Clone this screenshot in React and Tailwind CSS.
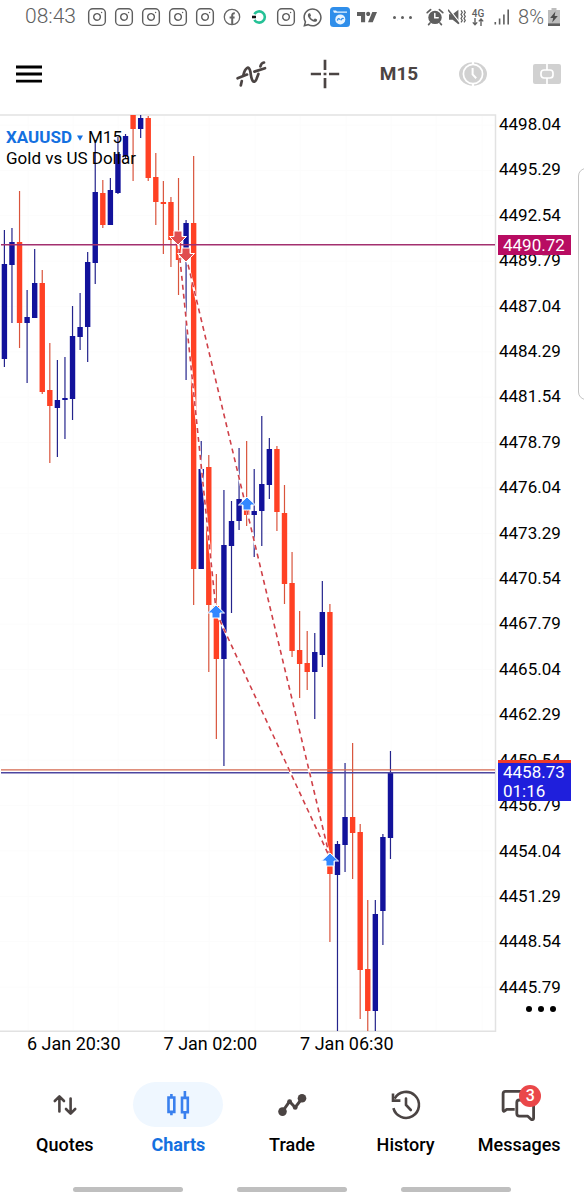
import React from 'react';
import { Instagram } from 'lucide-react';
import { FaWhatsapp } from 'react-icons/fa';
import { SiTradingview } from 'react-icons/si';

const BULL = '#12129b';
const BEAR = '#ff4124';

const CANDLE_START = 4.4;
const CANDLE_STEP = 7.57;

// [direction, body top, body bottom, high, low]
const CANDLES = [
  ['up', 264, 359, 230, 367],
  ['up', 242, 265, 228, 323],
  ['down', 242, 323, 191, 348],
  ['up', 317, 323, 290, 383],
  ['up', 283, 318, 249, 318],
  ['down', 283, 392, 270, 394],
  ['down', 390, 406, 343, 463],
  ['up', 400, 408, 360, 457],
  ['up', 398, 400, 357, 439],
  ['up', 336, 399, 306, 420],
  ['up', 327, 337, 293, 350],
  ['up', 262, 327, 252, 362],
  ['up', 192, 263, 140, 284],
  ['down', 193, 225, 180, 228],
  ['up', 190, 225, 178, 225],
  ['up', 154, 193, 137, 194],
  ['up', 136, 156, 134, 158],
  ['down', 115, 129, 115, 181],
  ['up', 118, 129, 115, 138],
  ['down', 118, 178, 116, 181],
  ['down', 177, 202, 153, 225],
  ['down', 202, 204, 181, 254],
  ['down', 202, 240, 197, 267],
  ['down', 235, 260, 178, 295],
  ['up', 223, 255, 220, 380],
  ['down', 223, 569, 156, 605],
  ['up', 469, 569, 441, 569],
  ['down', 467, 605, 455, 672],
  ['down', 606, 659, 574, 739],
  ['up', 545, 659, 490, 766],
  ['up', 521, 546, 501, 613],
  ['up', 499, 521, 448, 530],
  ['down', 499, 515, 441, 526],
  ['up', 511, 515, 469, 557],
  ['up', 484, 511, 416, 546],
  ['up', 449, 485, 438, 499],
  ['down', 449, 512, 446, 531],
  ['down', 513, 584, 485, 604],
  ['down', 583, 651, 552, 657],
  ['down', 650, 664, 611, 698],
  ['down', 663, 672, 631, 690],
  ['up', 652, 672, 633, 719],
  ['up', 612, 655, 581, 667],
  ['down', 612, 874, 604, 942],
  ['up', 844, 875, 841, 1031],
  ['up', 817, 845, 763, 872],
  ['down', 817, 833, 743, 879],
  ['down', 832, 970, 824, 1019],
  ['down', 969, 1011, 900, 1031],
  ['up', 914, 1011, 900, 1031],
  ['up', 837, 911, 834, 945],
  ['up', 773, 838, 751, 859],
];

const TRADE_LINES = [
  [178, 240, 216, 610],
  [186, 256, 330, 858],
  [216, 612, 330, 858],
];

const SELLS = [[178, 238], [186, 255]];
const BUYS = [[216, 612], [247, 504], [330, 860]];

const PRICES = [
  '4498.04', '4495.29', '4492.54', '4489.79', '4487.04', '4484.29', '4481.54',
  '4478.79', '4476.04', '4473.29', '4470.54', '4467.79', '4465.04', '4462.29',
  '4459.54', '4456.79', '4454.04', '4451.29', '4448.54', '4445.79',
];

const FacebookIcon = () => (
  <svg width="18" height="18" viewBox="0 0 18 18" fill="none" stroke="#666">
    <circle cx="9" cy="9" r="7.7" strokeWidth="1.3" />
    <path d="M9.2 16.5V7.3c0-1.5.8-2.1 2.6-2M6.6 9.4h5" strokeWidth="2" />
  </svg>
);

const RingIcon = () => (
  <svg width="16" height="16" viewBox="0 0 16 16" fill="none">
    <path d="M3.4 5.2A5.6 5.6 0 1 1 3.4 10.8" stroke="#25c196" strokeWidth="2.6" />
    <path d="M1 8h4" stroke="#111" strokeWidth="2.6" />
  </svg>
);

const ChannelIcon = () => (
  <svg width="20" height="20" viewBox="0 0 20 20">
    <rect width="20" height="20" rx="3.5" fill="#2f8eea" />
    <path d="M3 3.4h3l1 1.2h10v1.2H4z" fill="#e8f4ff" />
    <circle cx="10.3" cy="12.4" r="5" fill="#e8f4ff" />
    <path d="M7.4 13.6c.4-2.4 2-2.4 2.6-.8M11 13.4c.2-2 2-2.4 2.6-1.6" fill="none" stroke="#2f8eea" strokeWidth="1.3" />
  </svg>
);

const AlarmIcon = () => (
  <svg width="18" height="18" viewBox="0 0 18 18" fill="none" strokeLinecap="round">
    <circle cx="9" cy="9.4" r="6.7" fill="#5f5f5f" />
    <path d="M1.2 4.6 4.6 1.6M16.8 4.6 13.4 1.6M4 15l-1.4 1.6M14 15l1.4 1.6" stroke="#5f5f5f" strokeWidth="1.7" />
    <path d="M8.8 5.6v4.2h3.4" stroke="#fff" strokeWidth="1.5" />
  </svg>
);

const VibrateIcon = () => (
  <svg width="18" height="18" viewBox="0 0 18 18" fill="none">
    <path d="M1 6.2h3.6L10.4 1.8v14.4l-5.8-4.4H1z" fill="#5f5f5f" />
    <path d="M1.2 1.4 12 15" stroke="#fff" strokeWidth="1.4" />
    <path d="M0 1.8 11 15.8" stroke="#5f5f5f" strokeWidth="1.5" />
    <path d="M13 2.4l1.3 2-1.3 2 1.3 2-1.3 2 1.3 2-1.3 2M16 2.4l1.3 2-1.3 2 1.3 2-1.3 2 1.3 2-1.3 2" stroke="#5f5f5f" strokeWidth="1.2" />
  </svg>
);

const DataArrowsIcon = () => (
  <svg width="12" height="8" viewBox="0 0 12 8" fill="none" stroke="#5f5f5f" strokeWidth="1.4">
    <path d="M3 0v6.6M.8 4.4 3 6.8l2.2-2.4M9 8V1.2M6.8 3.4 9 1l2.2 2.4" />
  </svg>
);

const SignalIcon = () => (
  <svg width="16" height="16" viewBox="0 0 16 16" fill="#5f5f5f">
    <path d="M.5 13h1.6v2.5H.5zM4.8 9.5h1.6v6H4.8zM9.1 5.5h1.6v10H9.1zM13.4.5H15v15h-1.6z" />
  </svg>
);

const BatteryIcon = () => (
  <svg width="12" height="18" viewBox="0 0 12 18">
    <path d="M3.5 0h5v2H12v16H0V2h3.5z" fill="#bdbdbd" />
    <path d="M0 15.4h12V18H0z" fill="#5f5f5f" />
    <path d="M7.4 3.4 2.2 10h3L4.2 14.6 9.8 8H6.6z" fill="#4a4a4a" />
  </svg>
);

const MenuIcon = () => (
  <svg width="26" height="18" viewBox="0 0 26 18" stroke="#000" strokeWidth="2.8">
    <path d="M0 2h26M0 9h26M0 16.2h26" />
  </svg>
);

const IndicatorsIcon = () => (
  <svg width="31" height="26" viewBox="0 0 31 26" fill="none" stroke="#4b4443" strokeWidth="2.7" strokeLinecap="round">
    <path d="M4.8 24.4 5.8 20M7.4 14C9 7 13 3.5 14.4 10.7 15.3 19 17.5 24 20.4 18.3L22.4 13M24.4 5.4C25 3 26 1.8 28 1.5" />
    <path d="M1.6 17.3 11 13.6M18.4 10.6 29 7.2" />
  </svg>
);

const CrosshairIcon = () => (
  <svg width="30" height="30" viewBox="0 0 30 30" fill="none" stroke="#4b4443" strokeWidth="2.7">
    <path d="M.8 15H11M19 15h10.2M15 .8V11M15 19v10.2M13.6 15h2.8" />
  </svg>
);

const TickClockIcon = () => (
  <svg width="30" height="24" viewBox="0 0 30 24" fill="none">
    <ellipse cx="15" cy="12" rx="14" ry="11.8" fill="#d1d1d1" />
    <circle cx="15" cy="12" r="9.6" stroke="#fff" strokeWidth="1.7" />
    <path d="M15 0v3M15 21v3" stroke="#fff" strokeWidth="2.2" />
    <path d="M14.6 6v6.4l3.6 3.8" stroke="#fff" strokeWidth="2" />
  </svg>
);

const NewOrderIcon = () => (
  <svg width="28" height="20" viewBox="0 0 28 20" fill="none">
    <rect width="28" height="20" rx="2" fill="#d1d1d1" />
    <rect x="8" y="6" width="12" height="8" rx="3" stroke="#fff" strokeWidth="1.7" />
    <path d="M14 0v6M14 14v6" stroke="#fff" strokeWidth="1.7" />
  </svg>
);

const QuotesIcon = () => (
  <svg width="26" height="22" viewBox="0 0 26 22" fill="none" stroke="#4b4443" strokeWidth="2.6" strokeLinecap="round" strokeLinejoin="round">
    <path d="M7.4 17.4V2.8M2.8 7 7.4 2.4 12 7M18.6 4.6v14.6M14 15l4.6 4.6 4.6-4.6" />
  </svg>
);

const ChartsIcon = () => (
  <svg width="24" height="28" viewBox="0 0 24 28" fill="none" stroke="#3a80ee" strokeWidth="2.6">
    <path d="M2.5 6.5h5.8v14.4H2.5zM5.4 3v3.5M5.4 20.9v3.3M16 6.9h5.8v14.4H16zM18.9 0v6.9M18.9 21.3V28" />
  </svg>
);

const TradeIcon = () => (
  <svg width="30" height="24" viewBox="0 0 30 24" fill="none">
    <path d="M5.5 18.5 12.6 8.4l5.6 6L25 5.5" stroke="#4b4443" strokeWidth="3" strokeLinejoin="round" />
    <circle cx="5.5" cy="18.6" r="4.3" fill="#4b4443" />
    <circle cx="25" cy="5.2" r="4.3" fill="#4b4443" />
    <circle cx="12.6" cy="8.6" r="2.4" fill="#4b4443" />
    <circle cx="18.2" cy="14.4" r="2.4" fill="#4b4443" />
  </svg>
);

const HistoryIcon = () => (
  <svg width="32" height="32" viewBox="0 0 32 32" fill="none" stroke="#4b4443" strokeWidth="2.6">
    <path d="M3.4 19.2A13 13 0 1 0 4.6 9.6" />
    <path d="M3 4.4v7.2h7.4" />
    <path d="M16 9.6V16l4.8 5" strokeLinecap="round" />
  </svg>
);

const MessagesIcon = () => (
  <svg width="36" height="34" viewBox="0 0 36 34" fill="none" stroke="#4b4443" strokeWidth="2.8" strokeLinejoin="round">
    <path d="M28 3.4H4.5a2.4 2.4 0 0 0-2.4 2.4v16.4c0 1 .8 1.4 1.6.8l2-1.6h8" />
    <path d="M28 12H18.4a2.6 2.6 0 0 0-2.6 2.6v11a2.6 2.6 0 0 0 2.6 2.6h8.4l3.2 3c1 .9 2.6.5 2.6-1V14" />
  </svg>
);

const TABS = [
  { label: 'Quotes', icon: <QuotesIcon /> },
  { label: 'Charts', icon: <ChartsIcon />, active: true },
  { label: 'Trade', icon: <TradeIcon /> },
  { label: 'History', icon: <HistoryIcon /> },
  { label: 'Messages', icon: <MessagesIcon />, badge: 3 },
];

const Slot = ({ children }) => <div className="w-[27px] flex justify-center shrink-0">{children}</div>;

const InstagramIcon = () => <Instagram size={20} strokeWidth={1.7} />;

const StatusBar = () => (
  <div className="flex items-center h-[34px] text-[#5f5f5f] whitespace-nowrap">
    <span className="w-[83px] pl-[25px] shrink-0 text-[21px] font-light">08:43</span>
    {[0, 1, 2, 3, 4].map(n => <Slot key={n}><InstagramIcon /></Slot>)}
    <Slot><FacebookIcon /></Slot>
    <Slot><RingIcon /></Slot>
    <Slot><InstagramIcon /></Slot>
    <Slot><FaWhatsapp size={21} /></Slot>
    <Slot><ChannelIcon /></Slot>
    <Slot><SiTradingview size={20} /></Slot>
    <div className="flex justify-center gap-[5px] w-11 shrink-0">
      <span className="w-[3px] h-[3px] rounded-full bg-[#5f5f5f]" />
      <span className="w-[3px] h-[3px] rounded-full bg-[#5f5f5f]" />
      <span className="w-[3px] h-[3px] rounded-full bg-[#5f5f5f]" />
    </div>
    <div className="flex items-center gap-1 ml-auto pr-6">
      <AlarmIcon />
      <VibrateIcon />
      <div className="flex flex-col items-center w-4">
        <span className="text-[10px] leading-[9px] font-medium">4G</span>
        <DataArrowsIcon />
      </div>
      <div className="px-1"><SignalIcon /></div>
      <span className="text-[20px] font-light">8%</span>
      <BatteryIcon />
    </div>
  </div>
);

const Toolbar = () => (
  <header className="flex items-center justify-between h-20 pl-4">
    <button type="button" aria-label="Menu"><MenuIcon /></button>
    <div className="flex">
      <button type="button" aria-label="Indicators" className="w-[74px] flex justify-center items-center"><IndicatorsIcon /></button>
      <button type="button" aria-label="Crosshair" className="w-[74px] flex justify-center items-center"><CrosshairIcon /></button>
      <button type="button" className="w-[74px] text-[19px] font-bold text-[#4b4443]">M15</button>
      <button type="button" aria-label="Tick chart" className="w-[74px] flex justify-center items-center"><TickClockIcon /></button>
      <button type="button" aria-label="New order" className="w-[74px] flex justify-center items-center"><NewOrderIcon /></button>
    </div>
  </header>
);

const CandleChart = () => (
  <svg viewBox="0 114 497 918" className="block w-full h-auto">
    {[28, 73, 118, 164, 209, 255, 300, 346, 391, 436, 482].map(x => (
      <path key={x} d={`M${x} 116V1030`} stroke="#fcfcfc" />
    ))}
    {PRICES.map((price, i) => (
      <path key={price} d={`M0 ${125 + i * 45.37}H494`} stroke="#fcfcfc" />
    ))}
    <path d="M0 115H495.5V1031.3H0" fill="none" stroke="#e2e2e2" strokeWidth="1.5" />
    {CANDLES.map(([dir, top, bottom, high, low], i) => {
      const x = CANDLE_START + i * CANDLE_STEP;
      return (
        <g key={i}>
          <path d={`M${x} ${high}V${low}`} stroke={dir === 'up' ? '#24248c' : '#d9543c'} strokeWidth="1.2" />
          <rect x={x - 2.7} y={top} width="5.4" height={bottom - top} fill={dir === 'up' ? BULL : BEAR} />
        </g>
      );
    })}
    <path d="M1 244.8H495" stroke="#a3306f" strokeWidth="1.5" />
    <path d="M1 769.8H495" stroke="#d46a50" strokeWidth="1.2" />
    <path d="M1 772.8H495" stroke="#4c46a0" strokeWidth="1.5" />
    {TRADE_LINES.map(([x1, y1, x2, y2]) => (
      <g key={`${x1}-${x2}`}>
        <path d={`M${x1} ${y1}L${x2} ${y2}`} stroke="#fff" strokeWidth="2.2" />
        <path d={`M${x1} ${y1}L${x2} ${y2}`} stroke="#cf4048" strokeWidth="1.6" strokeDasharray="5 4" />
      </g>
    ))}
    {SELLS.map(([x, y]) => (
      <path key={x} d={`M${x - 4} ${y - 7}h8v5.5h4.5L${x} ${y + 7}l-8.5-8.5h4.5z`} fill="#e04e50" stroke="#fff" />
    ))}
    {BUYS.map(([x, y]) => (
      <path key={x} d={`M${x - 4} ${y + 6}h8v-5h4.5L${x} ${y - 7}l-8.5 8h4.5z`} fill="#3388ff" stroke="#fff" />
    ))}
  </svg>
);

const PriceAxis = () => (
  <div className="relative w-[87px] shrink-0 flex flex-col justify-between pb-[35px] pl-[2px] text-[17px] leading-5">
    {PRICES.map(price => <span key={price}>{price}</span>)}
    <div className="absolute left-px top-[13.2%] w-[73px] h-5 pl-[5px] bg-[#b80c62] text-white">4490.72</div>
    <div className="absolute left-px top-[70.4%] w-[73px] pl-[5px] bg-[#1f1fdc] border-t-3 border-[#f03c28] text-white leading-[19px]">
      <div>4458.73</div>
      <div>01:16</div>
    </div>
    <button type="button" aria-label="More" className="absolute bottom-5 right-7 flex gap-[6px]">
      <span className="w-[6px] h-[6px] rounded-full bg-black" />
      <span className="w-[6px] h-[6px] rounded-full bg-black" />
      <span className="w-[6px] h-[6px] rounded-full bg-black" />
    </button>
  </div>
);

const TabBar = () => (
  <nav className="grid grid-cols-5 px-2 pt-[26px]">
    {TABS.map(({ label, icon, active, badge }) => (
      <button key={label} type="button" className="flex flex-col items-center gap-2">
        <span className={`w-[90px] h-[45px] rounded-full flex items-center justify-center ${active ? 'bg-[#eff7ff]' : ''}`}>
          <span className="relative">
            {icon}
            {badge && (
              <span className="absolute -top-[3px] -right-1 w-[22px] h-[22px] rounded-full bg-[#ea4749] text-white text-[16px] leading-[22px] font-medium text-center">
                {badge}
              </span>
            )}
          </span>
        </span>
        <span className={`text-[18px] leading-5 ${active ? 'font-bold text-[#1470e0]' : 'font-medium text-black'}`}>{label}</span>
      </button>
    ))}
  </nav>
);

const App = () => (
  <div className="relative overflow-hidden bg-white text-black font-[Roboto,sans-serif]">
    <StatusBar />
    <Toolbar />
    <main>
      <div className="flex">
        <div className="relative flex-1 min-w-0">
          <CandleChart />
          <div className="absolute left-[6px] top-[13px] text-[17px] leading-[21px]">
            <div className="flex items-center">
              <button type="button" className="flex items-center gap-[5px] font-bold text-[#1470e0]">
                XAUUSD
                <svg width="6" height="6" viewBox="0 0 6 6" fill="#1470e0"><path d="M0 .5h6L3 5.8z" /></svg>
              </button>
              <span className="ml-[5px]">M15</span>
            </div>
            <div>Gold vs US Dollar</div>
          </div>
        </div>
        <PriceAxis />
      </div>
      <div className="flex gap-[43px] pl-[27px] text-[18px] leading-6 whitespace-nowrap">
        <span>6 Jan 20:30</span>
        <span>7 Jan 02:00</span>
        <span>7 Jan 06:30</span>
      </div>
    </main>
    <TabBar />
    <div className="flex justify-center gap-[54px] pt-8 pb-2">
      <span className="w-[110px] h-[5px] rounded-full bg-[#bfbfbf]" />
      <span className="w-[110px] h-[5px] rounded-full bg-[#bfbfbf]" />
      <span className="w-[110px] h-[5px] rounded-full bg-[#bfbfbf]" />
    </div>
    <div className="absolute -right-[6px] top-[168px] w-3 h-[232px] rounded-l-lg border border-[#c4c4c4] bg-white" />
  </div>
);

export default App;
